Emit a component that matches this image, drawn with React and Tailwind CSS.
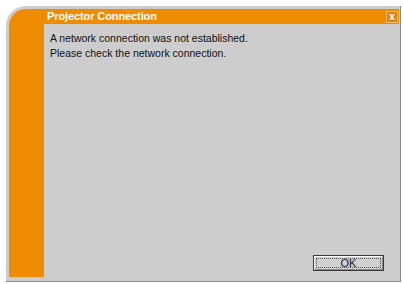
export default function App() {
  return (
    <div className="w-[403px] h-[284px] bg-white overflow-hidden" style={{ fontFamily: '"Liberation Sans", Arial, sans-serif' }}>
      <div className="ml-[6px] mt-[6px] w-[395px] h-[276px] bg-[#cdcdcd] rounded-tl-[20px] border-r border-b border-[#8a8a8a] pt-[3px] pl-[3px] pr-[1px] pb-[4px]">
        <div className="w-full h-full bg-[#ef8b00] rounded-tl-[17px] flex flex-col">
          <div className="h-[15px] flex items-center pl-[38px] pr-[1px]">
            <span className="text-white font-bold text-[11px] leading-none flex-1 tracking-[-0.1px]">Projector Connection</span>
            <div className="w-[12px] h-[12px] mt-[1px] bg-[#d9861c] border border-[#f6b860] flex items-center justify-center">
              <span className="text-white font-bold text-[10px] leading-none">x</span>
            </div>
          </div>
          <div className="flex-1 ml-[35px] bg-[#cdcdcd] flex flex-col pt-[6px] pl-[6px] pr-[15px] pb-[6px]">
            <p className="text-[10.5px] leading-[16px] text-[#111]">A network connection was not established.</p>
            <p className="text-[10.5px] leading-[15px] text-[#111]">Please check the network connection.</p>
            <div className="flex-1" />
            <div className="flex justify-end">
              <div className="w-[71px] h-[16px] border border-[#3a3a3a] bg-[#d0d0d0]">
                <div className="w-full h-full border-t border-l border-t-white border-l-white border-b border-r border-b-[#8a8a8a] border-r-[#8a8a8a] p-[1px]">
                  <div className="w-full h-full border border-dotted border-[#555] flex items-center justify-center text-[11px] leading-none text-[#1a1a1a]">OK</div>
                </div>
              </div>
            </div>
          </div>
        </div>
      </div>
    </div>
  );
}
